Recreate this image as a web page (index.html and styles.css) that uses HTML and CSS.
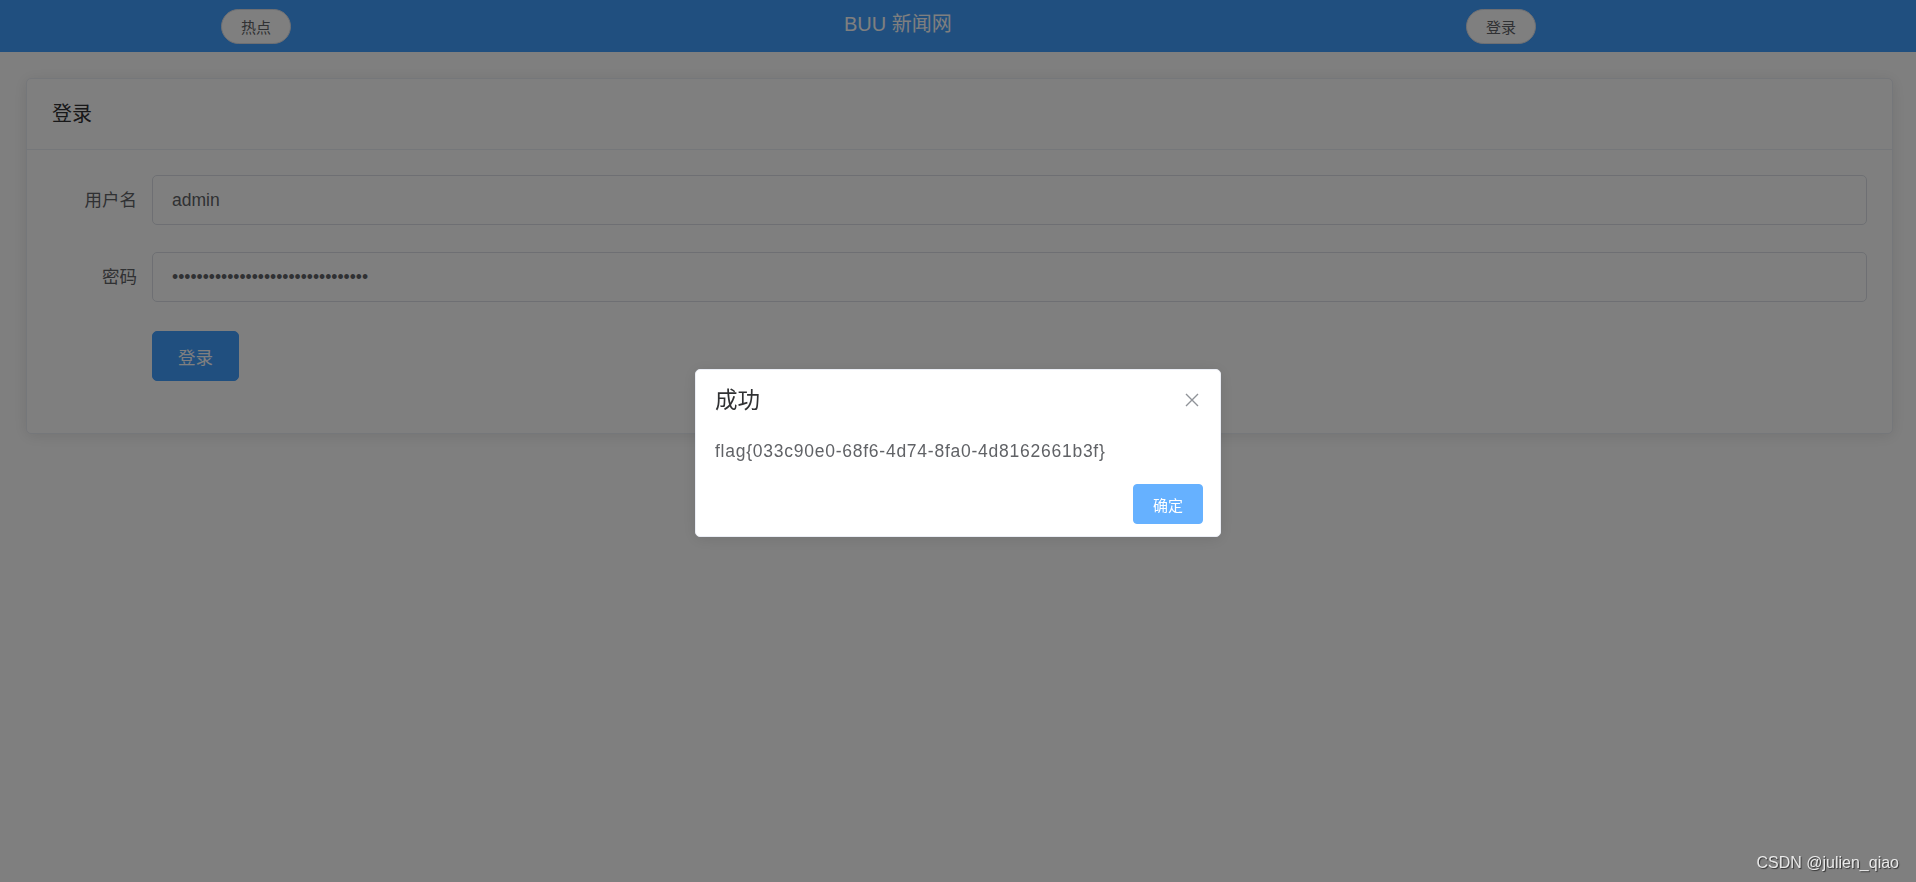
FILE: index.html
```html
<!DOCTYPE html>
<html lang="zh-CN">
<head>
    <meta charset="UTF-8">
    <meta name="viewport" content="width=device-width, initial-scale=1.0">
    <title>BUU 新闻网 - 登录</title>
    <link rel="stylesheet" href="styles.css">
</head>
<body>
    <div class="top-bar">
        <button class="round-button">热点</button>
        <div class="site-title">BUU 新闻网</div>
        <button class="round-button push-right">登录</button>
    </div>

    <div class="login-card">
        <div class="card-header">登录</div>
        <div class="card-body">
            <div class="form-item">
                <label class="form-label">用户名</label>
                <input class="form-input" type="text" value="admin">
            </div>
            <div class="form-item">
                <label class="form-label">密码</label>
                <input class="form-input" type="password" value="passwordpasswordpasswordpassword">
            </div>
            <div class="form-item submit-row">
                <span class="form-label"></span>
                <button class="primary-button">登录</button>
            </div>
        </div>
    </div>

    <div class="modal-mask">
        <div class="message-box">
            <div class="message-header">
                <span class="message-title">成功</span>
                <svg class="close-icon" width="14" height="14" viewBox="0 0 14 14">
                    <path d="M1 1 L13 13 M13 1 L1 13" stroke="#909399" stroke-width="1.4" fill="none"/>
                </svg>
            </div>
            <div class="message-content">flag{033c90e0-68f6-4d74-8fa0-4d8162661b3f}</div>
            <div class="message-buttons">
                <button class="confirm-button">确定</button>
            </div>
        </div>
    </div>

    <div class="watermark">CSDN @julien_qiao</div>
</body>
</html>
```

FILE: styles.css
```css
body {
    font-family: "Liberation Sans", "Noto Sans CJK SC", sans-serif;
    margin: 0;
    padding: 0;
    background: #fff;
    height: 100vh;
    overflow: hidden;
}

button {
    font-family: inherit;
    cursor: pointer;
}

.top-bar {
    height: 52px;
    background: #409eff;
    display: flex;
    align-items: center;
    padding: 0 380px 0 221px;
}

.round-button {
    width: 70px;
    height: 35px;
    padding: 0;
    background: #fff;
    border: 1px solid #dcdfe6;
    border-radius: 20px;
    color: #606266;
    font-size: 15px;
}

.site-title {
    margin-left: 553px;
    margin-bottom: 8px;
    color: #fff;
    font-size: 20px;
}

.push-right {
    margin-left: auto;
}

.login-card {
    margin: 26px 23px 0 26px;
    border: 1px solid #ebeef5;
    border-radius: 5px;
    background: #fff;
    box-shadow: 0 2px 15px rgba(0, 0, 0, 0.1);
}

.card-header {
    padding: 22px 25px;
    line-height: 26px;
    font-size: 20px;
    color: #303133;
    border-bottom: 1px solid #ebeef5;
}

.card-body {
    padding: 25px 25px 25px;
}

.form-item {
    display: flex;
    margin-bottom: 27px;
}

.form-label {
    width: 100px;
    flex-shrink: 0;
    box-sizing: border-box;
    padding-right: 15px;
    text-align: right;
    line-height: 50px;
    font-size: 17.5px;
    color: #606266;
}

.form-input {
    flex: 1;
    height: 50px;
    box-sizing: border-box;
    padding: 0 19px;
    border: 1px solid #dcdfe6;
    border-radius: 5px;
    font-family: inherit;
    font-size: 17.5px;
    color: #606266;
    outline: none;
}

.submit-row {
    margin-top: 29px;
}

.primary-button {
    height: 50px;
    padding: 0 25px;
    background: #409eff;
    border: 1px solid #409eff;
    border-radius: 5px;
    color: #fff;
    font-size: 17.5px;
}

.modal-mask {
    position: fixed;
    top: 0;
    left: 0;
    right: 0;
    bottom: 0;
    background: rgba(0, 0, 0, 0.5);
    display: flex;
    justify-content: center;
    align-items: center;
    padding-top: 24px;
}

.message-box {
    width: 526px;
    background: #fff;
    border: 1px solid #ebeef5;
    border-radius: 5px;
    padding-bottom: 12px;
    box-shadow: 0 2px 15px rgba(0, 0, 0, 0.1);
    box-sizing: border-box;
}

.message-header {
    display: flex;
    justify-content: space-between;
    align-items: center;
    padding: 20px 21px 12px 19px;
}

.message-title {
    font-size: 22.5px;
    line-height: 1;
    color: #303133;
}

.close-icon {
    margin-top: -2px;
}

.message-content {
    padding: 12px 19px;
    font-size: 17.5px;
    line-height: 30px;
    letter-spacing: 0.75px;
    color: #606266;
}

.message-buttons {
    padding: 6px 17px 0;
    text-align: right;
}

.confirm-button {
    height: 40px;
    padding: 0 19px;
    background: #66b1ff;
    border: 1px solid #66b1ff;
    border-radius: 4px;
    color: #fff;
    font-size: 15px;
}

.watermark {
    position: fixed;
    right: 17px;
    bottom: 10px;
    font-size: 16px;
    color: rgba(255, 255, 255, 0.85);
    text-shadow: 1px 1px 1px rgba(0, 0, 0, 0.6);
}
```
